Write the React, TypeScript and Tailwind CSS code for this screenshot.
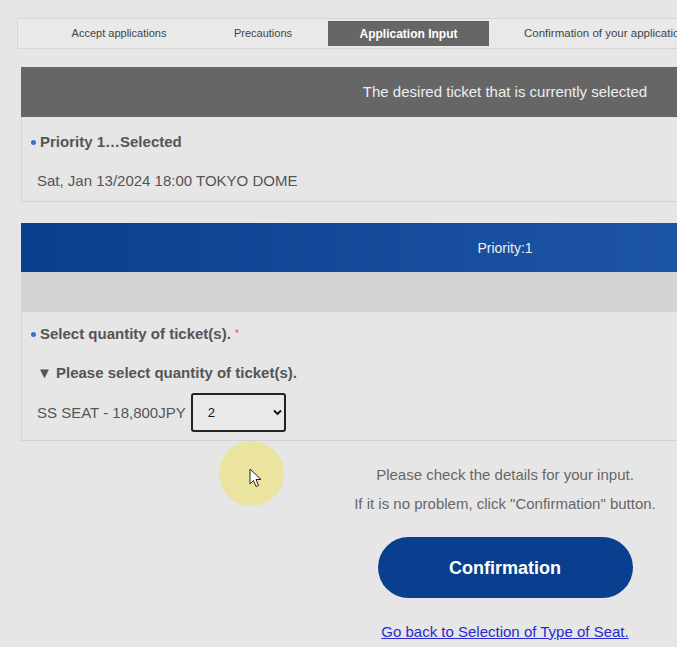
export default function App() {
  const font = { fontFamily: '"Liberation Sans", Arial, sans-serif' }

  return (
    <div className="relative h-[647px] w-full overflow-hidden bg-[#e6e6e6] text-[#555]" style={font}>
      {/* step tabs */}
      <div className="ml-[17px] mt-[18px] flex h-[31px] w-[980px] items-center border border-[#d6d6d6] bg-[#e9e9e9] text-[11px] text-[#444]">
        <div className="ml-[19px] w-[164px] text-center">Accept applications</div>
        <div className="w-[124px] text-center">Precautions</div>
        <div className="ml-[3px] flex h-[25px] w-[161px] items-center justify-center bg-[#666] text-[12px] font-bold text-white">
          Application Input
        </div>
        <div className="whitespace-nowrap pl-[35px] text-[11.5px]">Confirmation of your application</div>
      </div>

      <div className="ml-[21px] w-[968px] text-[15px] leading-[18px]">
        {/* selected ticket */}
        <div className="mt-[18px] flex h-[50px] items-center justify-center bg-[#666] text-[15px] text-[#eee]">
          The desired ticket that is currently selected
        </div>
        <div className="h-[85px] border border-t-0 border-[#d3d3d3] px-[9px] pt-[16px]">
          <div className="flex items-center gap-[4px] font-bold">
            <span className="h-[5px] w-[5px] rounded-full bg-[#3b6fd1]" />
            Priority 1…Selected
          </div>
          <div className="mt-[21px] pl-[6px]">Sat, Jan 13/2024 18:00 TOKYO DOME</div>
        </div>

        {/* priority block */}
        <div className="mt-[21px] flex h-[49px] items-center justify-center bg-gradient-to-r from-[#093f8d] to-[#2660b0] text-[14px] text-[#f0f0f0]">
          Priority:1
        </div>
        <div className="h-[40px] bg-[#d4d4d4]" />
        <div className="h-[129px] border border-t-0 border-[#d3d3d3] px-[9px] pt-[13px]">
          <div className="flex items-center gap-[4px] font-bold">
            <span className="h-[5px] w-[5px] rounded-full bg-[#3b6fd1]" />
            Select quantity of ticket(s).
            <span className="text-[10px] font-normal text-[#d9534f]">*</span>
          </div>
          <div className="mt-[21px] pl-[6px] font-bold">▼ Please select quantity of ticket(s).</div>
          <div className="mt-[11px] flex items-center gap-[5px] pl-[6px]">
            <span>SS SEAT - 18,800JPY</span>
            <div className="relative flex h-[39px] w-[95px] items-center rounded-[3px] border-2 border-[#222] bg-[#e9e9e9] pl-[15px] text-[13px] text-[#111]">
              2
              <svg className="absolute right-[2px] top-[14px]" width="9" height="7" viewBox="0 0 9 7">
                <path d="M1 1.5 L4.5 5 L8 1.5" fill="none" stroke="#111" strokeWidth="1.8" />
              </svg>
            </div>
          </div>
        </div>

        {/* footer */}
        <div className="mt-[25px] flex flex-col items-center text-[#666]">
          <div>Please check the details for your input.</div>
          <div className="mt-[11px]">If it is no problem, click "Confirmation" button.</div>
          <button className="mt-[24px] flex h-[61px] w-[255px] items-center justify-center rounded-full bg-[#0a3f8f] text-[18px] font-bold text-white">
            Confirmation
          </button>
          <a className="mt-[25px] text-[#2a2ad0] underline">Go back to Selection of Type of Seat.</a>
        </div>
      </div>

      {/* cursor highlight */}
      <div className="absolute left-[219px] top-[441px] h-[65px] w-[65px] rounded-full bg-[#ece38f] opacity-80" />
      <svg className="absolute left-[249px] top-[468px]" width="14" height="20" viewBox="0 0 14 20">
        <path d="M1 1 L1 16 L4.5 12.5 L7 18.5 L9.5 17.5 L7 11.5 L12 11.5 Z" fill="#fff" stroke="#222" strokeWidth="1" strokeLinejoin="round" />
      </svg>
    </div>
  )
}
